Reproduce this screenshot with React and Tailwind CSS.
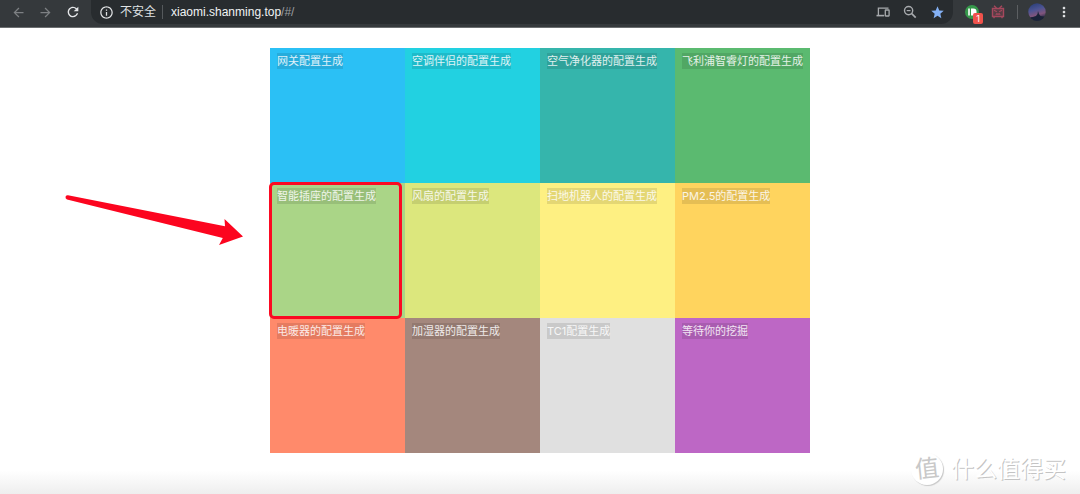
import { MdArrowBack, MdArrowForward, MdRefresh, MdOutlineInfo, MdStar, MdMoreVert } from "react-icons/md";

const tiles = [
  { label: "网关配置生成", color: "bg-[#2bc0f5]" },
  { label: "空调伴侣的配置生成", color: "bg-[#22d1e1]" },
  { label: "空气净化器的配置生成", color: "bg-[#35b5ac]" },
  { label: "飞利浦智睿灯的配置生成", color: "bg-[#5bba70]" },
  { label: "智能插座的配置生成", color: "bg-[#aad587]", marked: true },
  { label: "风扇的配置生成", color: "bg-[#dce77d]" },
  { label: "扫地机器人的配置生成", color: "bg-[#fef082]" },
  { label: "PM2.5的配置生成", color: "bg-[#ffd45e]" },
  { label: "电暖器的配置生成", color: "bg-[#ff8a6b]" },
  { label: "加湿器的配置生成", color: "bg-[#a4877d]" },
  { label: "TC1配置生成", color: "bg-[#e0e0e0]" },
  { label: "等待你的挖掘", color: "bg-[#bd67c5]" },
];

function DevicesIcon() {
  return (
    <svg viewBox="0 0 14 12" className="h-3 w-3.5" fill="none" stroke="currentColor" strokeWidth="1.3" aria-hidden="true">
      <path d="M12.500 2.200H2.400V9" />
      <path d="M.5 9.600h7.700" strokeWidth="1.600" />
      <rect x="9.300" y="4" width="3.800" height="6" rx=".4" />
    </svg>
  );
}

function ZoomOutIcon() {
  return (
    <svg viewBox="0 0 14 14" className="size-[14px]" fill="none" stroke="currentColor" strokeWidth="1.4" aria-hidden="true">
      <circle cx="5.600" cy="5.600" r="4.100" />
      <path d="M8.700 8.700l4 4" strokeWidth="1.700" />
      <path d="M3.700 5.600h3.800" strokeWidth="1.200" />
    </svg>
  );
}

function PushIcon() {
  return (
    <svg viewBox="0 0 14 14" className="size-[14px]" aria-hidden="true">
      <circle cx="7" cy="7" r="7" fill="#35984a" />
      <path d="M4 3.600v6.800" stroke="#fff" strokeWidth="1.600" />
      <path d="M6 3.600h2.200a3.400 3.400 0 0 1 0 6.800H6z" fill="#fff" />
    </svg>
  );
}

function TvIcon() {
  return (
    <svg viewBox="0 0 14 14" className="size-[14px]" fill="none" stroke="#a5485d" strokeWidth="1.4" aria-hidden="true">
      <path d="M3 .8l2.500 2.200M11 .8L8.500 3" />
      <path d="M1.500 3.500h11v8h-11z" fill="#a5485d" fillOpacity=".3" />
      <path d="M3 5.300l2.800 1.500M11 5.300L8.200 6.800" strokeWidth="1.200" />
      <path d="M4.800 9.800l1.100-1.200L7 9.600l1.100-1 1.100 1.200" strokeWidth="1.100" />
      <path d="M3 11.600V13.200M11 11.600v1.600" />
    </svg>
  );
}

function Avatar() {
  return (
    <svg viewBox="0 0 18 18" className="size-[18px]" aria-hidden="true">
      <defs>
        <linearGradient id="dusk" x1="0" y1="0" x2="0.3" y2="1">
          <stop offset="0" stopColor="#233a72" />
          <stop offset=".45" stopColor="#4c5493" />
          <stop offset=".75" stopColor="#80557c" />
          <stop offset="1" stopColor="#1d2540" />
        </linearGradient>
        <clipPath id="round"><circle cx="9" cy="9" r="8.700" /></clipPath>
      </defs>
      <g clipPath="url(#round)">
        <rect width="18" height="18" fill="url(#dusk)" />
        <path d="M0 14.500l5-.5 3-1 1.500-2 .5-3 1 3 1.500 2 5.500 1v5H0z" fill="#1a2338" />
      </g>
    </svg>
  );
}

function Toolbar() {
  return (
    <header className="flex h-7 items-start border-b border-[#6b6e70] bg-[#35393c] pl-[11px] pr-2 text-[#dfe1e3]">
      <div className="flex h-6 items-center gap-3 text-[#7d8083]">
        <button aria-label="后退"><MdArrowBack className="size-[15px]" /></button>
        <button aria-label="前进"><MdArrowForward className="size-[15px]" /></button>
        <button aria-label="刷新" className="text-[#e4e6e8]"><MdRefresh className="size-4" /></button>
      </div>
      <div className="ml-2.5 flex h-6 min-w-0 flex-1 items-center rounded-b-xl bg-[#282c2f] px-2">
        <MdOutlineInfo className="size-[15px] shrink-0" />
        <span className="ml-1.5 text-xs">不安全</span>
        <span className="ml-1.5 h-3.5 w-px bg-[#55595c]" />
        <span className="ml-2 font-['Liberation_Sans',sans-serif] text-xs text-[#f1f3f4]">xiaomi.shanming.top<span className="text-[#9a9da0]">/#/</span></span>
        <div className="ml-auto flex items-center gap-[13px] text-[#a7aaad]">
          <button aria-label="发送到设备"><DevicesIcon /></button>
          <button aria-label="缩放"><ZoomOutIcon /></button>
          <button aria-label="收藏" className="text-[#84b1f5]"><MdStar className="size-[15px]" /></button>
        </div>
      </div>
      <div className="flex h-6 items-center pl-3">
        <button aria-label="Pushbullet" className="relative">
          <PushIcon />
          <span className="absolute left-2 top-2 flex h-[11px] w-[10px] items-center justify-center rounded-xs bg-[#f0524b] text-[9px] leading-none text-white">1</span>
        </button>
        <button aria-label="电视助手" className="ml-3"><TvIcon /></button>
        <span className="ml-3 h-3.5 w-px bg-[#5c5f62]" />
        <button aria-label="用户" className="ml-2.5"><Avatar /></button>
        <button aria-label="更多" className="ml-2.5"><MdMoreVert className="size-4" /></button>
      </div>
    </header>
  );
}

function Marker() {
  return (
    <>
      <span className="pointer-events-none absolute -bottom-px -left-px -top-px right-[3px] z-10 rounded-[5px] border-3 border-[#fb0a22]" />
      <svg viewBox="0 0 180 52" className="pointer-events-none absolute right-full top-3 mr-[26px] h-[52px] w-[180px]" aria-hidden="true">
        <path d="M4 .2L161 31.200L160.500 24L179 41.500L155 50L158.800 43L3 4.400Q1 3.500 1.600 1.600Q2.300 0 4 .2Z" fill="#fc051f" />
      </svg>
    </>
  );
}

export default function App() {
  return (
    <div className="flex min-h-screen flex-col bg-white font-['Inter','Noto_Sans_CJK_SC',sans-serif]">
      <Toolbar />
      <main className="mx-auto mt-5 grid w-1/2 grid-cols-4">
        {tiles.map((t) => (
          <a key={t.label} href="#/" className={`relative aspect-square whitespace-nowrap px-[7px] py-[5px] text-[11px] leading-4 ${t.color}`}>
            <span className="inline-block bg-black/10 leading-4 text-white/85">{t.label}</span>
            {t.marked && <Marker />}
          </a>
        ))}
      </main>
      <footer className="flex flex-1 items-center justify-end gap-2 bg-linear-to-b from-white from-40% to-[#ececec] pr-3.5 pb-3">
        <span className="flex size-8 items-center justify-center rounded-full bg-white text-2xl leading-none text-[#c8c8c8] shadow-[1px_1px_1px_#c8c8c8]"><span className="-rotate-6">值</span></span>
        <span className="text-[23px] leading-8 text-white [text-shadow:1px_1px_0px_#c4c4c4]">什么值得买</span>
      </footer>
    </div>
  );
}
